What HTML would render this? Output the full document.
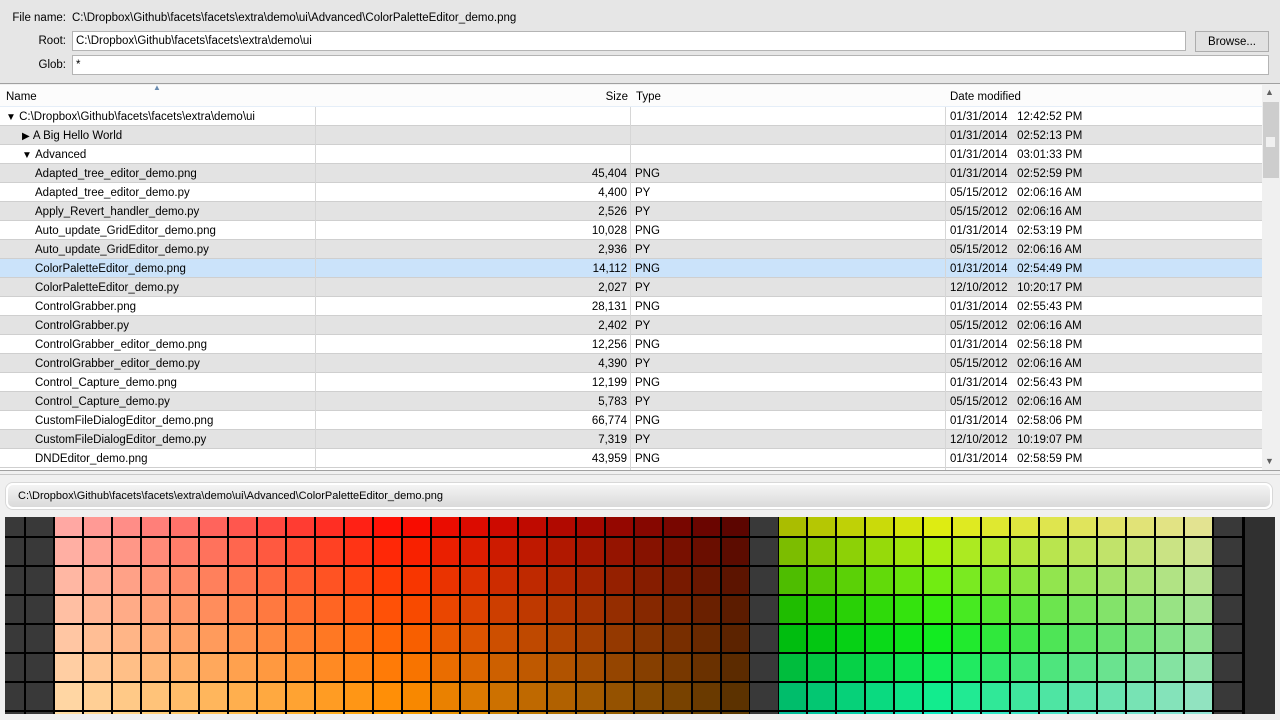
<!DOCTYPE html>
<html><head><meta charset="utf-8"><style>
*{box-sizing:border-box;margin:0;padding:0}
body{width:1280px;height:720px;overflow:hidden;background:#f0f0f0;font-family:"Liberation Sans",sans-serif;font-size:11.5px;color:#000;position:relative}
.abs{position:absolute}
.top{left:0;top:0;width:1280px;height:84px;background:#e6e6e6;border-bottom:1px solid #a0a0a0}
.lbl{text-align:right;width:66px;left:0}
.inp{background:#fff;border:1px solid #b4b4b4;height:20px;line-height:19px;padding-left:3px}
.btn{left:1195px;top:31px;width:74px;height:21px;border:1px solid #adadad;background:#e1e1e1;text-align:center;line-height:20px}
.tbl{left:0;top:85px;width:1280px;height:386px;background:#fff;border-bottom:1px solid #a0a0a0;overflow:hidden}
.hdr{position:absolute;left:0;top:0;width:1262px;height:22px;background:#fcfcfc;border-bottom:1px solid #e5eef8}
.hdr div{position:absolute;top:6px}
.row{position:absolute;left:0;width:1262px;height:19px;border-bottom:1px solid #cfcfcf;line-height:19px}
.row div{position:absolute;top:1px}
.g{background:#e3e3e3}.s{background:#cbe3fa}
.c2{right:635px;text-align:right}.c3{left:635px}.c4{left:950px}
.vl{position:absolute;top:22px;width:1px;height:364px;background:#d6d6d6}
.sb{left:1262px;top:85px;width:18px;height:385px;background:#f0f0f0}
.path{left:6px;top:483px;width:1266px;height:26px;border:2px solid #fff;border-radius:7px;background:linear-gradient(#f4f4f4,#dadada);line-height:22px;padding-left:10px;font-size:11px;box-shadow:0 0 0 1px #d8d8d8}
.pal{left:5px;top:517px;width:1240px;height:197px;overflow:hidden;background:#000}
.cell{position:absolute;width:27px;height:27px}
</style></head><body>
<div class="abs top"></div>
<div class="abs lbl" style="top:12px">File name:</div>
<div class="abs" style="left:72px;top:12px">C:\Dropbox\Github\facets\facets\extra\demo\ui\Advanced\ColorPaletteEditor_demo.png</div>
<div class="abs lbl" style="top:35px">Root:</div>
<div class="abs inp" style="left:72px;top:31px;width:1114px">C:\Dropbox\Github\facets\facets\extra\demo\ui</div>
<div class="abs btn">Browse...</div>
<div class="abs lbl" style="top:59px">Glob:</div>
<div class="abs inp" style="left:72px;top:55px;width:1197px">*</div>
<div class="abs tbl" id="tbl">
<div class="hdr"><div style="left:6px">Name</div><div style="left:153px;top:-2px;font-size:8px;color:#6a8cb0">&#9650;</div><div style="right:634px">Size</div><div style="left:636px">Type</div><div style="left:950px">Date modified</div></div>
</div>
<div class="abs sb"><div class="abs" style="left:3px;top:2px;font-size:9px;color:#606060">&#9650;</div><div class="abs" style="left:1px;top:17px;width:16px;height:76px;background:#cdcdcd"></div><div class="abs" style="left:4px;top:52px;width:9px;height:10px;background:#f0f0f0"></div><div class="abs" style="left:3px;top:371px;font-size:9px;color:#606060">&#9660;</div></div>
<div class="abs" style="left:0;top:474px;width:1280px;height:1px;background:#c8c8c8"></div>
<div class="abs path">C:\Dropbox\Github\facets\facets\extra\demo\ui\Advanced\ColorPaletteEditor_demo.png</div>
<div class="abs pal" id="pal"></div>
<div class="abs" style="left:1245px;top:517px;width:30px;height:197px;background:#303030"></div>
<script>
var rows=[["▼ C:\\Dropbox\\Github\\facets\\facets\\extra\\demo\\ui","","","01/31/2014  12:42:52 PM",6],
["▶ A Big Hello World","","","01/31/2014  02:52:13 PM",22],
["▼ Advanced","","","01/31/2014  03:01:33 PM",22],
["Adapted_tree_editor_demo.png","45,404","PNG","01/31/2014  02:52:59 PM"],
["Adapted_tree_editor_demo.py","4,400","PY","05/15/2012  02:06:16 AM"],
["Apply_Revert_handler_demo.py","2,526","PY","05/15/2012  02:06:16 AM"],
["Auto_update_GridEditor_demo.png","10,028","PNG","01/31/2014  02:53:19 PM"],
["Auto_update_GridEditor_demo.py","2,936","PY","05/15/2012  02:06:16 AM"],
["ColorPaletteEditor_demo.png","14,112","PNG","01/31/2014  02:54:49 PM"],
["ColorPaletteEditor_demo.py","2,027","PY","12/10/2012  10:20:17 PM"],
["ControlGrabber.png","28,131","PNG","01/31/2014  02:55:43 PM"],
["ControlGrabber.py","2,402","PY","05/15/2012  02:06:16 AM"],
["ControlGrabber_editor_demo.png","12,256","PNG","01/31/2014  02:56:18 PM"],
["ControlGrabber_editor_demo.py","4,390","PY","05/15/2012  02:06:16 AM"],
["Control_Capture_demo.png","12,199","PNG","01/31/2014  02:56:43 PM"],
["Control_Capture_demo.py","5,783","PY","05/15/2012  02:06:16 AM"],
["CustomFileDialogEditor_demo.png","66,774","PNG","01/31/2014  02:58:06 PM"],
["CustomFileDialogEditor_demo.py","7,319","PY","12/10/2012  10:19:07 PM"],
["DNDEditor_demo.png","43,959","PNG","01/31/2014  02:58:59 PM"]];
var t=document.getElementById('tbl'),h='';
rows.forEach(function(r,i){var cls=i==8?'s':(i%2?'g':'');
h+='<div class="row '+cls+'" style="top:'+(22+i*19)+'px"><div style="left:'+(r[4]||35)+'px">'+r[0].replace(/^([▼▶]) /,'<span style="font-size:10px">$1</span>&nbsp;')+'</div><div class="c2">'+r[1]+'</div><div class="c3">'+r[2]+'</div><div class="c4">'+r[3].replace('  ','&nbsp;&nbsp;&nbsp;')+'</div></div>';});
h+='<div class="vl" style="left:315px"></div><div class="vl" style="left:630px"></div><div class="vl" style="left:945px"></div>';
t.insertAdjacentHTML('beforeend',h);
var p=document.getElementById('pal'),s='';
function cell(x,y,c){s+='<div class="cell" style="left:'+x+'px;top:'+y+'px;background:'+c+'"></div>';}
for(var r=0;r<8;r++){var y=-8+r*29;var f=r/6;
 s+='<div class="cell" style="left:0;top:'+y+'px;width:19px;height:27px;background:#393939"></div>';
 s+='<div class="cell" style="left:21px;top:'+y+'px;width:27px;background:#393939"></div>';
 for(var c=0;c<24;c++){var hh=3+30*f,l=82-64*c/23;cell(50+c*29,y,'hsl('+hh+',100%,'+l+'%)');}
 s+='<div class="cell" style="left:745px;top:'+y+'px;width:28px;background:#393939"></div>';
 for(var c=0;c<15;c++){var hh=66+88*f-6*c/14*(1-f),l=37+(c/14)*36;var sat=100-40*c/14;cell(774+c*29,y,'hsl('+hh+','+sat+'%,'+l+'%)');}
 s+='<div class="cell" style="left:1209px;top:'+y+'px;width:28px;background:#393939"></div>';
}
p.innerHTML=s;
</script>
</body></html>
